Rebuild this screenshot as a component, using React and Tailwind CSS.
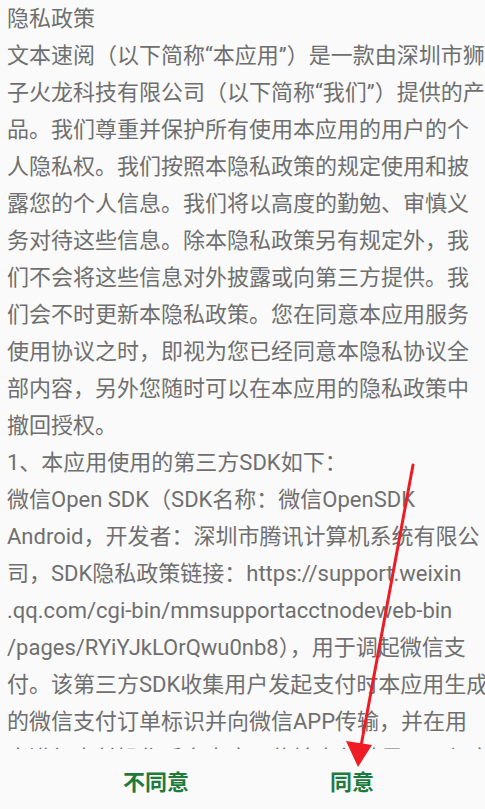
import React from 'react';

const lines = [
    '隐私政策',
    '文本速阅（以下简称“本应用”）是一款由深圳市狮子火龙',
    '子火龙科技有限公司（以下简称“我们”）提供的产品',
    '品。我们尊重并保护所有使用本应用的用户的个',
    '人隐私权。我们按照本隐私政策的规定使用和披',
    '露您的个人信息。我们将以高度的勤勉、审慎义',
    '务对待这些信息。除本隐私政策另有规定外，我',
    '们不会将这些信息对外披露或向第三方提供。我',
    '们会不时更新本隐私政策。您在同意本应用服务',
    '使用协议之时，即视为您已经同意本隐私协议全',
    '部内容，另外您随时可以在本应用的隐私政策中',
    '撤回授权。',
    '1、本应用使用的第三方SDK如下：',
    '微信Open SDK（SDK名称：微信OpenSDK',
    'Android，开发者：深圳市腾讯计算机系统有限公',
    '司，SDK隐私政策链接：https://support.weixin',
    '.qq.com/cgi-bin/mmsupportacctnodeweb-bin',
    '/pages/RYiYJkLOrQwu0nb8），用于调起微信支',
    '付。该第三方SDK收集用户发起支付时本应用生成的',
    '的微信支付订单标识并向微信APP传输，并在用',
    '户进行支付操作后向本应用传输支付结果，以便完成',
];

export default function App() {
    return (
        <div
            className="relative h-screen w-full flex flex-col bg-[#fafafa] overflow-hidden"
            style={{ fontFamily: 'Roboto, "Noto Sans CJK SC", sans-serif' }}
        >
            {/* policy text */}
            <div className="h-[749px] shrink-0 overflow-hidden pl-[7px] text-[22px] leading-[37px] text-[#6f6f6f]">
                {lines.map((line, i) => (
                    <div key={i} className="whitespace-nowrap">{line}</div>
                ))}
            </div>

            {/* buttons */}
            <div className="flex-1 flex items-center pl-[123px] gap-[141px] pt-[7px] text-[22px] font-bold text-[#1d7a3c]">
                <button>不同意</button>
                <button>同意</button>
            </div>

            {/* red annotation arrow */}
            <svg className="absolute left-0 top-0 pointer-events-none" width="485" height="809" viewBox="0 0 485 809">
                <line x1="413" y1="465" x2="361" y2="746" stroke="#ee1c25" strokeWidth="3" strokeLinecap="round" />
                <polygon points="358,767 346,741 372,745" fill="#ee1c25" />
            </svg>
        </div>
    );
}
